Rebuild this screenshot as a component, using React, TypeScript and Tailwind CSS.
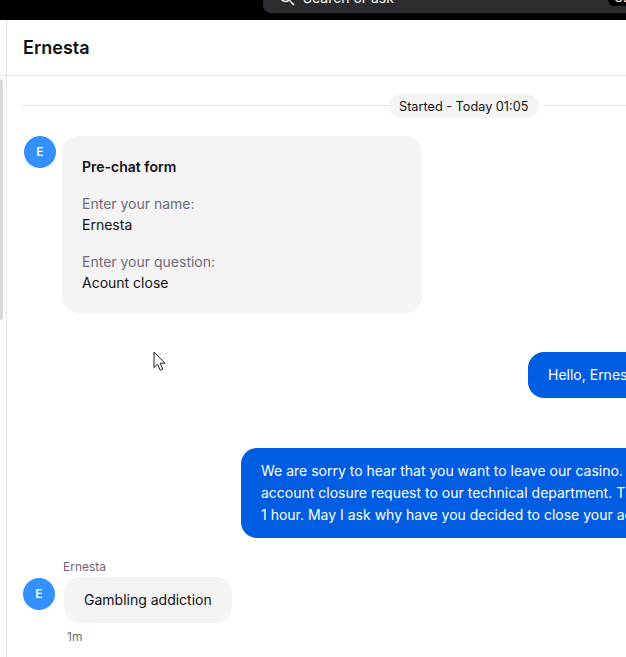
function Avatar() {
  return (
    <div className="flex h-8 w-8 shrink-0 items-center justify-center rounded-full bg-[#3590ff] text-xs font-semibold text-white">
      E
    </div>
  );
}

function Field({ label, value }: { label: string; value: string }) {
  return (
    <div>
      <p className="leading-[22px] text-[#6c6c78]">{label}</p>
      <p className="-mt-px leading-[22px] text-[#111114]">{value}</p>
    </div>
  );
}

export default function App() {
  return (
    <div
      className="relative flex h-[657px] w-[626px] flex-col overflow-hidden bg-white text-sm"
      style={{ fontFamily: "Inter, 'Liberation Sans', sans-serif" }}
    >
      <div className="flex h-5 shrink-0 items-end overflow-hidden bg-black pb-[7px] pl-[263px]">
        <div className="flex h-[30px] w-[400px] shrink-0 items-center gap-2 rounded-lg bg-[#2c2c30] px-4 text-white">
          <svg width="16" height="16" viewBox="0 0 16 16" fill="none" stroke="#fff" strokeWidth="1.4">
            <circle cx="6.5" cy="6.5" r="5" />
            <path d="M10.5 10.5 15 15" />
          </svg>
          <span>Search or ask</span>
          <span className="ml-[206px] rounded-md bg-black px-1.5 text-xs">Ctrl</span>
        </div>
      </div>

      <div className="flex min-h-0 flex-1">
        <div className="w-[7px] shrink-0 border-r border-[#e4e4e7]">
          <div className="h-[56px] w-[6px] border-b border-[#e4e4e7]" />
          <div className="mt-[3px] h-[241px] w-[3px] rounded-r bg-[#d9d9dc]" />
        </div>

        <div className="min-w-0 flex-1">
          <header className="flex h-[56px] items-center border-b border-[#e4e4e7] pl-4">
            <h1 className="text-lg font-semibold text-[#111114]">Ernesta</h1>
          </header>

          <div className="mt-[18px] flex h-6 items-center pl-4">
            <div className="mb-[2px] h-px w-[366px] shrink-0 bg-[#e4e4e7]" />
            <span className="h-6 w-[150px] shrink-0 whitespace-nowrap rounded-full bg-[#f4f4f5] px-2.5 pt-px text-[12.7px] leading-6 text-[#111114]">
              Started - Today 01:05
            </span>
            <div className="mb-[2px] ml-[5px] h-px flex-1 bg-[#e4e4e7]" />
          </div>

          <div className="mt-[18px] flex items-start gap-1.5 pl-[17px]">
            <Avatar />
            <div className="h-[177px] w-[360px] rounded-2xl bg-[#f4f4f4] px-5 pt-5">
              <p className="font-semibold leading-[22px] text-[#111114]">Pre-chat form</p>
              <div className="mt-[15px] flex flex-col gap-[15px]">
                <Field label="Enter your name:" value="Ernesta" />
                <Field label="Enter your question:" value="Acount close" />
              </div>
            </div>
          </div>

          <div className="ml-[521px] mt-[39px] h-[46px] w-[300px] whitespace-nowrap rounded-2xl bg-[#005ce0] px-5 leading-[46px] text-white">
            Hello, Ernesta
          </div>

          <div className="ml-[234px] mt-[50px] h-[90px] w-[600px] whitespace-nowrap rounded-2xl bg-[#005ce0] px-5 py-3 leading-[22px] text-white">
            <p>We are sorry to hear that you want to leave our casino. I will forward your</p>
            <p>account closure request to our technical department. They will process it within</p>
            <p>1 hour. May I ask why have you decided to close your account?</p>
          </div>

          <p className="ml-14 mt-[21px] text-xs leading-4 text-[#6f5f73]">Ernesta</p>
          <div className="mt-[2px] flex items-start gap-[9px] pl-4">
            <div className="mt-px">
              <Avatar />
            </div>
            <div className="h-[46px] rounded-2xl bg-[#f4f4f4] px-5 leading-[46px] text-[#111114]">
              Gambling addiction
            </div>
          </div>
          <p className="ml-[60px] mt-1.5 text-xs leading-4 text-[#6c6c78]">1m</p>
        </div>
      </div>

      <svg className="absolute left-[153px] top-[351px]" width="13" height="20" viewBox="0 0 13 20" fill="#fff" stroke="#222" strokeWidth="1">
        <path d="M1 1v15.500l3.600-3.300 2.600 6 2.600-1.100-2.600-5.900H12z" />
      </svg>
    </div>
  );
}
